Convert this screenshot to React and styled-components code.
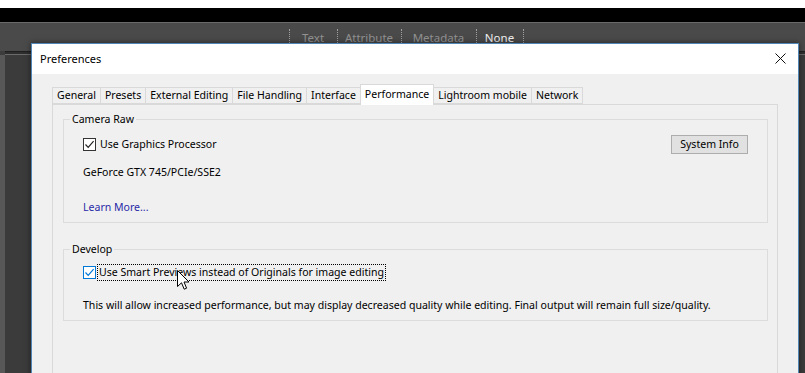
import React from "react";
import styled, { createGlobalStyle } from "styled-components";

const Global = createGlobalStyle`
  html, body { margin: 0; padding: 0; width: 805px; height: 373px; overflow: hidden; background: #fff; }
  * { box-sizing: border-box; }
  #root { width: 805px; height: 373px; }
`;

const UI_FONT = `"Noto Sans", "Open Sans", sans-serif`;

const Page = styled.div`
  width: 805px;
  height: 373px;
  display: flex;
  flex-direction: column;
  background: #fff;
  padding-top: 8px;
`;

const BlackBand = styled.div`
  height: 14px;
  background: #000;
  flex: none;
`;

const Workspace = styled.div`
  position: relative;
  flex: 1;
  display: flex;
  flex-direction: column;
  background: #3c3c3c;
  border-top: 1px solid #6a6a6a;
  overflow: hidden;
`;

const FilterBar = styled.div`
  height: 28px;
  background: #4a4a4a;
  display: flex;
  justify-content: center;
  align-items: center;
  padding-left: 7px;
  font-family: ${UI_FONT};
  font-size: 11.5px;
`;

const FilterItem = styled.div`
  display: flex;
  align-items: center;
  justify-content: center;
  height: 16px;
  width: ${(p) => p.$w}px;
  border-left: 1px dotted #a0a0a0;
  color: ${(p) => (p.$active ? "#f2f2f2" : "#939393")};
`;

const Rule = styled.div`
  height: 4px;
  border-top: 1px solid #202020;
  border-bottom: 1px solid #6b6b6b;
  background: #2e2e2e;
  margin-left: 5px;
`;

const Lower = styled.div`
  flex: 1;
  border-left: 5px solid #585858;
  background: #3b3b3b;
`;

const Dialog = styled.div`
  position: absolute;
  left: 31px;
  top: 20px;
  width: 768px;
  height: 420px;
  background: #f0f0f0;
  border: 1px solid #4f86b6;
  box-shadow: 0 0 6px rgba(0, 0, 0, 0.5);
  display: flex;
  flex-direction: column;
  font-family: ${UI_FONT};
  font-size: 10.55px;
  color: #000;
`;

const TitleBar = styled.div`
  height: 30px;
  background: #fff;
  display: flex;
  align-items: center;
  justify-content: space-between;
  padding: 0 8px 1px 8px;
  flex: none;
`;

const Title = styled.span`
  font-size: 11px;
  color: #000;
`;

const CloseButton = styled.div`
  width: 20px;
  height: 20px;
  display: flex;
  align-items: center;
  justify-content: center;
`;

const Body = styled.div`
  flex: 1;
  padding: 10px 20px 0 20px;
  display: flex;
  flex-direction: column;
`;

const TabStrip = styled.div`
  display: flex;
  align-items: flex-end;
  height: 20px;
  position: relative;
  z-index: 1;
`;

const Tab = styled.div`
  height: ${(p) => (p.$active ? "21px" : "17px")};
  margin-bottom: ${(p) => (p.$active ? "-1px" : "0")};
  padding: ${(p) => (p.$active ? "0 4px 3px" : "0 4px 1px")};
  display: flex;
  align-items: center;
  white-space: nowrap;
  background: ${(p) => (p.$active ? "#fff" : "#f0f0f0")};
  border: 1px solid #d9d9d9;
  border-bottom: ${(p) => (p.$active ? "none" : "1px solid #d9d9d9")};
  margin-left: -1px;
  &:first-child { margin-left: 0; }
`;

const Panel = styled.div`
  flex: 1;
  border: 1px solid #d9d9d9;
  background: #f0f0f0;
  padding: 7px 9px 0 10px;
  display: flex;
  flex-direction: column;
  gap: 19px;
`;

const Group = styled.fieldset`
  margin: 0;
  border: 1px solid #dcdcdc;
  padding: 0;
  min-width: 0;
`;

const Legend = styled.legend`
  padding: 0 2px;
  margin-left: 6px;
  line-height: 15px;
`;

const GroupContent = styled.div`
  display: flex;
  flex-direction: column;
  padding: 0 19px 7px 19px;
`;

const Row = styled.div`
  display: flex;
  align-items: center;
  justify-content: space-between;
  height: ${(p) => p.$h}px;
  margin-top: ${(p) => p.$mt || 0}px;
`;

const TextLine = styled.div`
  height: 16px;
  line-height: 16px;
  margin-top: ${(p) => p.$mt}px;
  color: ${(p) => (p.$link ? "#2a2aa8" : "#000")};
  white-space: nowrap;
`;

const CheckLabel = styled.label`
  display: flex;
  align-items: center;
  gap: ${(p) => (p.$focus ? "1px" : "2px")};
  position: relative;
`;

const Box = styled.span`
  width: 13px;
  height: 13px;
  border: 1px solid ${(p) => (p.$hover ? "#0078d7" : "#333")};
  background: #fff;
  display: flex;
  align-items: center;
  justify-content: center;
`;

const LabelText = styled.span`
  padding: 0 1px;
  line-height: 15px;
  border: 1px ${(p) => (p.$focus ? "dotted #000" : "solid transparent")};
  white-space: nowrap;
`;

const Button = styled.div`
  width: 77px;
  height: 19px;
  background: #e1e1e1;
  border: 1px solid #adadad;
  display: flex;
  align-items: center;
  justify-content: center;
  padding-bottom: 1px;
`;

const Cursor = styled.svg`
  position: absolute;
  left: 94px;
  top: 6px;
`;

function Check({ hover }) {
  return (
    <Box $hover={hover}>
      <svg width="11" height="11" viewBox="0 0 11 11">
        <path d="M1.5 5.5 L4.2 8.3 L9.6 2.2" fill="none" stroke={hover ? "#0078d7" : "#222"} strokeWidth="1.2" />
      </svg>
    </Box>
  );
}

const tabs = ["General", "Presets", "External Editing", "File Handling", "Interface", "Performance", "Lightroom mobile", "Network"];

const filters = [
  { label: "Text", w: 48 },
  { label: "Attribute", w: 64 },
  { label: "Metadata", w: 75 },
  { label: "None", w: 47, active: true },
  { label: "", w: 1 },
];

export default function App() {
  return (
    <>
      <Global />
      <Page>
        <BlackBand />
        <Workspace>
          <FilterBar>
            {filters.map((f, i) => (
              <FilterItem key={i} $w={f.w} $active={f.active}>
                {f.label}
              </FilterItem>
            ))}
          </FilterBar>
          <Rule />
          <Lower />
          <Dialog>
            <TitleBar>
              <Title>Preferences</Title>
              <CloseButton>
                <svg width="11" height="11" viewBox="0 0 11 11">
                  <path d="M0.5 0.5 L10.5 10.5 M10.5 0.5 L0.5 10.5" stroke="#111" strokeWidth="1" />
                </svg>
              </CloseButton>
            </TitleBar>
            <Body>
              <TabStrip>
                {tabs.map((t) => (
                  <Tab key={t} $active={t === "Performance"}>
                    {t}
                  </Tab>
                ))}
              </TabStrip>
              <Panel>
                <Group>
                  <Legend>Camera Raw</Legend>
                  <GroupContent>
                    <Row $h={19} $mt={8}>
                      <CheckLabel>
                        <Check />
                        <LabelText>Use Graphics Processor</LabelText>
                      </CheckLabel>
                      <Button>System Info</Button>
                    </Row>
                    <TextLine $mt={10}>GeForce GTX 745/PCIe/SSE2</TextLine>
                    <TextLine $mt={19} $link>Learn More...</TextLine>
                  </GroupContent>
                </Group>
                <Group>
                  <Legend>Develop</Legend>
                  <GroupContent>
                    <Row $h={17} $mt={7}>
                      <CheckLabel $focus>
                        <Check hover />
                        <LabelText $focus>Use Smart Previews instead of Originals for image editing</LabelText>
                        <Cursor width="13" height="21" viewBox="0 0 13 21">
                          <path d="M0.5 0.5 L0.5 16.5 L4.5 12.8 L7.2 19.2 L9.6 18.2 L7 12 L12 12 Z" fill="#fff" stroke="#000" strokeWidth="1" strokeLinejoin="miter" />
                        </Cursor>
                      </CheckLabel>
                    </Row>
                    <TextLine $mt={16}>This will allow increased performance, but may display decreased quality while editing. Final output will remain full size/quality.</TextLine>
                  </GroupContent>
                </Group>
              </Panel>
            </Body>
          </Dialog>
        </Workspace>
      </Page>
    </>
  );
}
